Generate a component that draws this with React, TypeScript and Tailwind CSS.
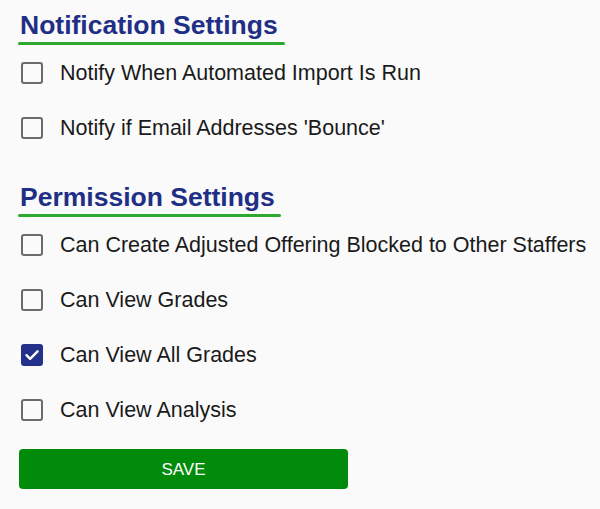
import React from "react";

function Box({ checked }: { checked?: boolean }) {
  if (checked) {
    return (
      <span className="flex h-[22px] w-[22px] shrink-0 items-center justify-center rounded-[3px] bg-[#23318a]">
        <svg width="16" height="16" viewBox="0 0 16 16" fill="none">
          <path d="M2.5 8.2l3.6 3.6L13.6 4.3" stroke="#fff" strokeWidth="2.4" strokeLinecap="round" strokeLinejoin="round" />
        </svg>
      </span>
    );
  }
  return <span className="block h-[22px] w-[22px] shrink-0 rounded-[3px] border-2 border-[#6b6b6b] bg-[#fafafa]" />;
}

function Row({ label, checked }: { label: string; checked?: boolean }) {
  return (
    <div className="flex h-[55px] items-center">
      <span className="ml-[1px]">
        <Box checked={checked} />
      </span>
      <span className="ml-[17px] text-[21.5px] leading-[26px] text-[#1a1a1a]">{label}</span>
    </div>
  );
}

function Heading({ text, w }: { text: string; w: string }) {
  return (
    <div>
      <h2 className="text-[26.5px] font-bold leading-[28px] text-[#1f2f86]">{text}</h2>
      <div className={`ml-[-2px] mt-[2.5px] h-[3px] rounded-full bg-[#2ea82e] ${w}`} />
    </div>
  );
}

export default function App() {
  return (
    <div
      className="min-h-[509px] w-[600px] bg-[#fafafa] pl-[20px] pt-[11px]"
      style={{ fontFamily: '"Liberation Sans", Arial, sans-serif' }}
    >
      <Heading text="Notification Settings" w="w-[267px]" />
      <div className="mt-[1px]">
        <Row label="Notify When Automated Import Is Run" />
        <Row label="Notify if Email Addresses 'Bounce'" />
      </div>
      <div className="mt-[27.5px]">
        <Heading text="Permission Settings" w="w-[263px]" />
      </div>
      <div className="mt-[1px]">
        <Row label="Can Create Adjusted Offering Blocked to Other Staffers" />
        <Row label="Can View Grades" />
        <Row label="Can View All Grades" checked />
        <Row label="Can View Analysis" />
      </div>
      <button className="ml-[-1px] mt-[11.8px] flex h-[40px] w-[329px] items-center justify-center rounded-[4px] bg-[#008c0a] text-[17px] text-white">
        SAVE
      </button>
    </div>
  );
}
